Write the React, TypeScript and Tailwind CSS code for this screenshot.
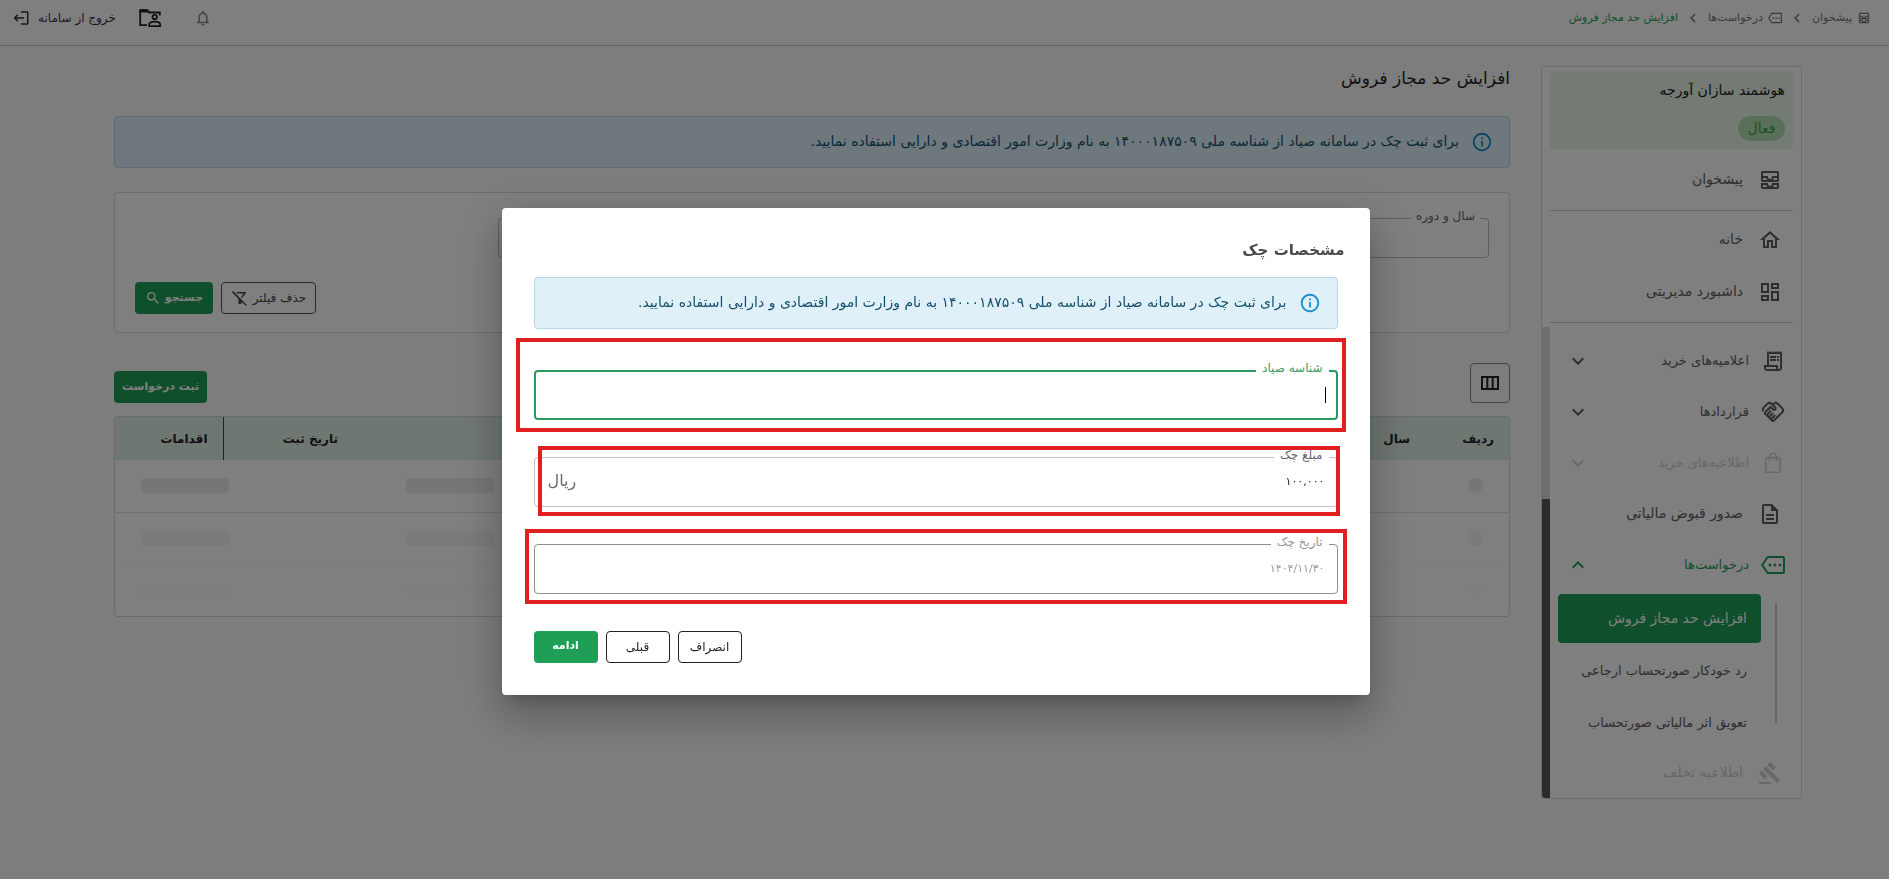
import type { ComponentType, ReactNode } from "react"
import {
  MdChevronLeft,
  MdExpandLess,
  MdExpandMore,
  MdGavel,
  MdInfoOutline,
  MdLogout,
  MdNotificationsNone,
  MdOutlineAllInbox,
  MdOutlineDashboard,
  MdOutlineDescription,
  MdOutlineFilterAltOff,
  MdOutlineHandshake,
  MdOutlineHome,
  MdOutlineMore,
  MdOutlineReceiptLong,
  MdOutlineViewColumn,
  MdSearch,
} from "react-icons/md"

type Icon = ComponentType<{ className?: string }>

const NOTICE =
  "برای ثبت چک در سامانه صیاد از شناسه ملی ۱۴۰۰۰۱۸۷۵۰۹ به نام وزارت امور اقتصادی و دارایی استفاده نمایید."

const groups: { label: string; icon: Icon; disabled?: boolean }[] = [
  { label: "اعلامیه‌های خرید", icon: MdOutlineReceiptLong },
  { label: "قراردادها", icon: MdOutlineHandshake },
  { label: "اطلاعیه‌های خرید", icon: BagIcon, disabled: true },
]

const skeletonRows = [
  { tone: "bg-[#ececec]", line: "border-[#e2e2e2]" },
  { tone: "bg-[#f4f4f4]", line: "border-[#f5f5f5]" },
  { tone: "bg-[#fdfdfd]", line: "border-transparent" },
]

function BagIcon({ className }: { className?: string }) {
  return (
    <svg viewBox="0 0 24 24" fill="none" stroke="currentColor" strokeWidth="1.6" className={className}>
      <rect x="4.800" y="6.800" width="14.400" height="14.400" rx="1" />
      <path d="M8.500 10V6a3.500 3.500 0 0 1 7 0v4" />
    </svg>
  )
}

function FolderPersonIcon({ className }: { className?: string }) {
  return (
    <svg viewBox="0 0 24 24" fill="none" stroke="currentColor" strokeWidth="1.800" className={className}>
      <path d="M9 19.200H2.200V4.500h7l2 2h10.600v3" />
      <path d="M1.300 4.500c0-.7.500-1.200 1.200-1.200h7l3 3.200H1.300z" fill="currentColor" stroke="none" />
      <circle cx="16.700" cy="11" r="2.200" />
      <path
        d="M11.200 20.200v-1.700c0-1.800 2.500-2.900 5.500-2.900s5.500 1.100 5.500 2.900v1.700z"
        strokeLinejoin="round"
      />
    </svg>
  )
}

function Notice() {
  return (
    <div className="flex h-13 items-center gap-3 rounded border border-[#b4d7e8] bg-[#dff0f9] px-4 text-[#14506e]">
      <MdInfoOutline className="size-[22px] shrink-0 text-[#1a8fd0]" />
      <p className="pb-px text-[14px] whitespace-nowrap">{NOTICE}</p>
    </div>
  )
}

function NavItem({ icon: Icon, label, disabled }: { icon: Icon; label: string; disabled?: boolean }) {
  return (
    <a
      href="#"
      className={`flex h-[51px] items-center gap-[15px] pr-[19px] text-[14px] ${disabled ? "text-[#d0d0d0]" : "text-[#5c5c5c]"}`}
    >
      <Icon className="size-6" />
      {label}
    </a>
  )
}

function NavGroup({
  icon: Icon,
  label,
  disabled,
  open,
}: {
  icon: Icon
  label: string
  disabled?: boolean
  open?: boolean
}) {
  const color = disabled ? "text-[#d0d0d0]" : open ? "text-[#1f9f56]" : "text-[#5c5c5c]"
  return (
    <button
      type="button"
      disabled={disabled}
      aria-expanded={!!open}
      className={`flex h-[51px] w-full items-center gap-3 pr-4 pl-4 text-[13px] ${color}`}
    >
      <Icon className="size-6" />
      <span className="flex-1 text-right">{label}</span>
      {open ? <MdExpandLess className="size-6" /> : <MdExpandMore className="size-6" />}
    </button>
  )
}

function Sidebar() {
  return (
    <aside className="w-[261px] shrink-0 self-start overflow-hidden rounded border border-[#dadada] bg-white">
      <div className="px-2 pt-[5px]">
        <div className="rounded bg-[#e8f5e9] px-2 pt-1 pb-2">
          <p className="text-[14px] leading-7 text-[#222]">هوشمند سازان آورجه</p>
          <span className="mt-3 inline-flex h-[25px] w-[47px] items-center justify-center rounded-full bg-[#b2dfb4] pb-px align-top text-[14px] text-[#43a047]">
            فعال
          </span>
        </div>
      </div>
      <div className="mx-2 border-b border-[#cfcfcf] py-[5px]">
        <div className="-mr-2">
          <NavItem icon={MdOutlineAllInbox} label="پیشخوان" />
        </div>
      </div>
      <div className="mx-2 border-b border-[#cfcfcf] pt-[3px] pb-[5px]">
        <div className="-mr-2 flex flex-col gap-px">
          <NavItem icon={MdOutlineHome} label="خانه" />
          <NavItem icon={MdOutlineDashboard} label="داشبورد مدیریتی" />
        </div>
      </div>
      <div className="mt-1 flex">
        <nav className="min-w-0 flex-1 pt-2">
          {groups.map((g) => (
            <NavGroup key={g.label} {...g} />
          ))}
          <NavItem icon={MdOutlineDescription} label="صدور قبوض مالیاتی" />
          <NavGroup icon={MdOutlineMore} label="درخواست‌ها" open />
          <div className="mt-1 flex gap-[14px] pr-6 pl-2">
            <div className="mt-[9px] mb-6 w-0.5 shrink-0 bg-[#cfcfcf]" />
            <div className="flex min-w-0 flex-1 flex-col gap-[3px] text-[13px] whitespace-nowrap text-[#5c5c5c]">
              <a href="#" className="flex h-[49px] items-center rounded bg-[#1f9f56] px-[14px] pb-px text-[14px] text-white">
                افزایش حد مجاز فروش
              </a>
              <a href="#" className="flex h-[49px] items-center px-[14px]">
                رد خودکار صورتحساب ارجاعی
              </a>
              <a href="#" className="flex h-[49px] items-center px-[14px]">
                تعویق اثر مالیاتی صورتحساب
              </a>
            </div>
          </div>
          <NavItem icon={MdGavel} label="اطلاعیه تخلف" disabled />
        </nav>
        <div className="flex w-2 shrink-0 flex-col bg-[#dcdcdc]">
          <div className="mt-[172px] flex-1 bg-[#565656]" />
        </div>
      </div>
    </aside>
  )
}

function TopBar() {
  return (
    <header className="flex h-[46px] items-start justify-between border-b border-[#c8c8c8] bg-white pt-[6px] pr-[18px] pl-[12px]">
      <nav className="flex h-6 items-center text-[11px] text-[#777]">
        <a href="#" className="flex items-center gap-[5px]">
          <MdOutlineAllInbox className="size-[14px]" />
          پیشخوان
        </a>
        <MdChevronLeft className="mx-[6px] size-[18px]" />
        <a href="#" className="flex items-center gap-[5px]">
          <MdOutlineMore className="size-[14px]" />
          درخواست‌ها
        </a>
        <MdChevronLeft className="mx-[6px] size-[18px]" />
        <span className="text-[#1f9f56]">افزایش حد مجاز فروش</span>
      </nav>
      <div className="flex h-6 items-center">
        <button type="button" aria-label="اعلان‌ها" className="ml-8 text-[#8a8a8a]">
          <MdNotificationsNone className="size-[18px]" />
        </button>
        <button type="button" aria-label="پوشه" className="ml-[22px] text-[#222]">
          <FolderPersonIcon className="size-6" />
        </button>
        <button type="button" className="flex items-center gap-2 text-[12px] text-[#333]">
          خروج از سامانه
          <MdLogout className="size-[18px] -scale-x-100" />
        </button>
      </div>
    </header>
  )
}

function FilterCard() {
  return (
    <section className="mt-6 rounded border border-[#dadada] bg-white px-5 pt-[25px] pb-[18px]">
      <div className="relative h-10 w-[calc(75%-24px)]">
        <input id="period" className="h-full w-full rounded border border-[#bdbdbd] px-3 text-[12px]" />
        <label htmlFor="period" className="absolute -top-[10px] right-[9px] bg-white px-[5px] text-[12px] leading-4 text-[#666]">
          سال و دوره
        </label>
      </div>
      <div className="mt-6 flex justify-end gap-2">
        <button
          type="button"
          className="flex h-8 w-[95px] items-center justify-center gap-1 rounded border border-[#555] text-[12px] whitespace-nowrap text-[#444]"
        >
          حذف فیلتر
          <MdOutlineFilterAltOff className="size-[18px]" />
        </button>
        <button
          type="button"
          className="flex h-8 w-[78px] items-center justify-center gap-1 rounded bg-[#1f9f56] text-[11px] font-bold text-white"
        >
          جستجو
          <MdSearch className="size-4" />
        </button>
      </div>
    </section>
  )
}

function RequestsTable() {
  return (
    <div className="mt-[13px] overflow-hidden rounded border border-[#d5d5d5] bg-white">
      <table className="w-full table-fixed border-collapse text-right text-[12px] text-[#222]">
        <thead className="bg-[#dfeee5]">
          <tr className="h-[43px]">
            <th className="w-[84px] pr-[15px]">ردیف</th>
            <th className="w-[130px] pr-[15px]">سال</th>
            <th />
            <th className="w-[130px] pr-[15px]">تاریخ ثبت</th>
            <th className="w-[108px] border-r border-[#444] pr-[15px]">اقدامات</th>
          </tr>
        </thead>
        <tbody>
          {skeletonRows.map(({ tone, line }) => (
            <tr key={tone} className={`h-13 border-b last:border-0 ${line}`}>
              <td colSpan={5} className="px-[26px]">
                <div className="flex justify-between">
                  <span className={`size-[15px] rounded-full ${tone}`} />
                  {[0, 1, 2, 3, 4].map((i) => (
                    <span key={i} className={`h-[15px] w-[88px] rounded ${tone}`} />
                  ))}
                </div>
              </td>
            </tr>
          ))}
        </tbody>
      </table>
    </div>
  )
}

function Field({
  id,
  label,
  value,
  placeholder,
  frame,
  border,
  labelColor,
  disabled,
  children,
}: {
  id: string
  label: string
  value?: string
  placeholder?: string
  frame: string
  border: string
  labelColor: string
  disabled?: boolean
  children?: ReactNode
}) {
  return (
    <div className="relative h-[50px]">
      <input
        id={id}
        defaultValue={value}
        placeholder={placeholder}
        disabled={disabled}
        className={`h-full w-full rounded bg-white px-3 text-[11px] text-[#222] outline-none placeholder:text-[#999] ${border}`}
      />
      <label
        htmlFor={id}
        className={`absolute -top-[10px] right-[9px] bg-white px-[6px] text-[12px] leading-4 ${labelColor}`}
      >
        {label}
      </label>
      {children}
      <div className={`pointer-events-none absolute border-4 border-[#e02020] ${frame}`} />
    </div>
  )
}

function ChequeDialog() {
  return (
    <div className="fixed inset-0 flex items-center justify-center bg-black/50 pt-[23px] pr-[18px]">
      <div
        role="dialog"
        aria-modal="true"
        aria-labelledby="cheque-title"
        className="w-full max-w-[868px] rounded bg-white px-8 pt-7 pb-8 shadow-[0_11px_15px_-7px_rgba(0,0,0,0.2),0_24px_38px_3px_rgba(0,0,0,0.14),0_9px_46px_8px_rgba(0,0,0,0.12)]"
      >
        <h2 id="cheque-title" className="-mr-[7px] mb-[13px] text-[15px] leading-7 font-bold text-[#4a4a4a]">
          مشخصات چک
        </h2>
        <Notice />
        <form className="mt-[41px] flex flex-col gap-[37px]">
          <Field
            id="sayad"
            label="شناسه صیاد"
            border="border-2 border-[#2a9a5c]"
            labelColor="text-[#3f9a66]"
            frame="-top-8 -bottom-3 -left-[18px] -right-2"
          >
            <span className="absolute top-[17px] right-3 h-4 w-px bg-black" />
          </Field>
          <Field
            id="amount"
            label="مبلغ چک"
            value="۱۰۰,۰۰۰"
            border="border border-[#c0c0c0]"
            labelColor="text-[#666]"
            frame="-top-[11px] -bottom-[9px] left-1 -right-[2px]"
          >
            <span className="absolute top-3 left-[14px] text-[16px] leading-6 text-[#6a6a6a]">ریال</span>
          </Field>
          <Field
            id="date"
            label="تاریخ چک"
            placeholder="۱۴۰۴/۱۱/۳۰"
            border="border border-[#8f8f8f]"
            labelColor="text-[#999]"
            frame="-top-[15px] -bottom-[10px] -left-[9px] -right-[9px]"
            disabled
          />
          <div className="flex justify-end gap-2 text-[12px]">
            <button type="button" className="h-8 w-16 rounded border border-[#222] text-[#222]">
              انصراف
            </button>
            <button type="button" className="h-8 w-16 rounded border border-[#222] text-[#222]">
              قبلی
            </button>
            <button type="button" className="h-8 w-16 rounded bg-[#1f9f56] text-[11px] font-bold text-white">
              ادامه
            </button>
          </div>
        </form>
      </div>
    </div>
  )
}

export default function App() {
  return (
    <div dir="rtl" className="min-h-screen bg-[#fafafa] font-['DejaVu_Sans',sans-serif]">
      <TopBar />
      <div className="flex gap-[31px] pt-5 pr-[87px] pl-[114px]">
        <Sidebar />
        <main className="min-w-0 flex-1">
          <h1 className="mb-[26px] text-[17px] leading-6 text-[#222]">افزایش حد مجاز فروش</h1>
          <Notice />
          <FilterCard />
          <div className="mt-[30px] flex items-end justify-between">
            <button
              type="button"
              aria-label="ستون‌ها"
              className="flex size-10 items-center justify-center rounded border border-[#888] text-[#222]"
            >
              <MdOutlineViewColumn className="size-6" />
            </button>
            <button type="button" className="h-8 w-[93px] rounded bg-[#1f9f56] text-[11px] font-bold whitespace-nowrap text-white">
              ثبت درخواست
            </button>
          </div>
          <RequestsTable />
        </main>
      </div>
      <ChequeDialog />
    </div>
  )
}
